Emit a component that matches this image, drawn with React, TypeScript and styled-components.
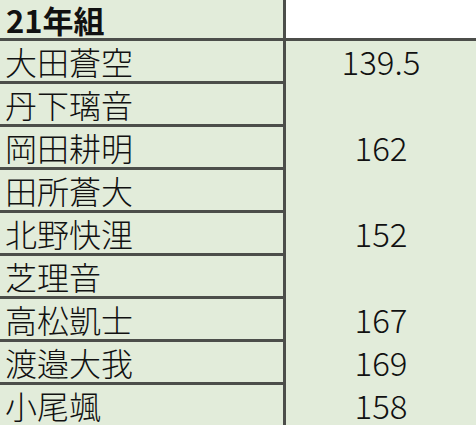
import React from 'react';
import styled, { createGlobalStyle } from 'styled-components';

const GlobalStyle = createGlobalStyle`
  html, body {
    margin: 0;
    padding: 0;
    background: #e2ecda;
  }
`;

const line = '#4c4e4a';

const Sheet = styled.div`
  display: grid;
  grid-template-columns: 286px 1fr;
  width: 476px;
  height: 425px;
  overflow: hidden;
  background: #e2ecda;
  font-family: 'Noto Sans CJK JP', 'Noto Sans', sans-serif;
  color: #111;
`;

const HeadCell = styled.div<{ $blank?: boolean }>`
  display: flex;
  align-items: center;
  height: 38px;
  line-height: 1;
  padding-left: 6px;
  font-size: 31px;
  font-weight: 700;
  background: ${(p) => (p.$blank ? '#ffffff' : 'transparent')};
  border-bottom: 3px solid ${line};
  border-right: ${(p) => (p.$blank ? 'none' : `3px solid ${line}`)};
`;

const NameCell = styled.div`
  display: flex;
  align-items: center;
  height: 40px;
  line-height: 1;
  padding-left: 5px;
  font-size: 32px;
  font-weight: 300;
  border-right: 3px solid ${line};
  border-bottom: 3px solid ${line};
  white-space: nowrap;
`;

const ValueCell = styled.div`
  display: flex;
  align-items: center;
  justify-content: center;
  height: 40px;
  padding-bottom: 3px;
  line-height: 1;
  font-size: 33px;
  font-weight: 300;
`;

const rows: [string, string][] = [
  ['大田蒼空', '139.5'],
  ['丹下璃音', ''],
  ['岡田耕明', '162'],
  ['田所蒼大', ''],
  ['北野快浬', '152'],
  ['芝理音', ''],
  ['高松凱士', '167'],
  ['渡邉大我', '169'],
  ['小尾颯', '158'],
];

const App: React.FC = () => (
  <>
    <GlobalStyle />
    <Sheet>
      <HeadCell>21年組</HeadCell>
      <HeadCell $blank />
      {rows.map(([name, value]) => (
        <React.Fragment key={name}>
          <NameCell>{name}</NameCell>
          <ValueCell>{value}</ValueCell>
        </React.Fragment>
      ))}
    </Sheet>
  </>
);

export default App;
